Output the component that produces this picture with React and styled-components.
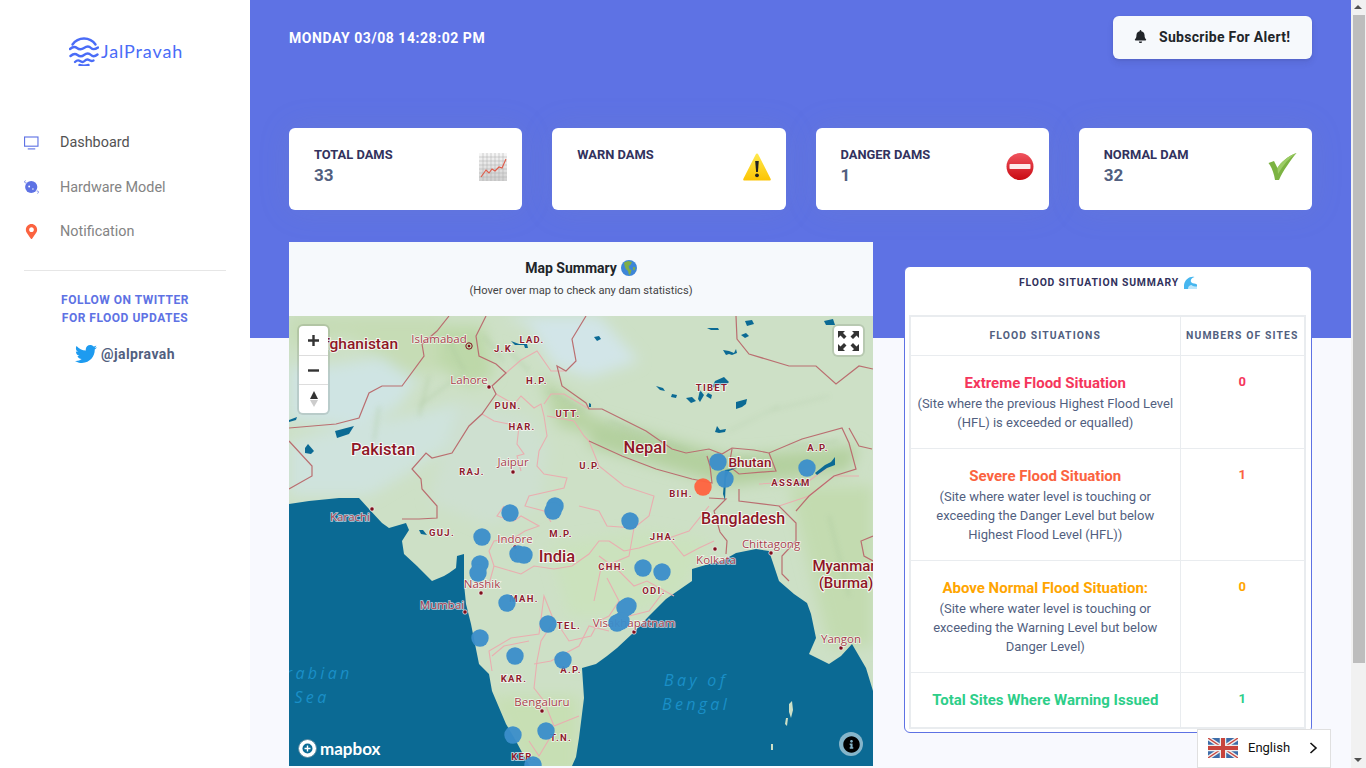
import styled, { createGlobalStyle } from 'styled-components';
import { FaBell, FaTwitter, FaMapMarkerAlt, FaInfoCircle } from 'react-icons/fa';

const GlobalStyle = createGlobalStyle`
  html, body {
    margin: 0;
    padding: 0;
    background: #f8f9fe;
    font-family: Roboto, "Open Sans", sans-serif;
    color: #525f7f;
  }
  * { box-sizing: border-box; }
`;

const MAP_W = 584;
const MAP_H = 450;

const markers = [
  [221, 197], [266, 190], [264, 195], [193, 221], [341, 205], [229, 238], [235, 239],
  [191, 248], [189, 257], [218, 287], [259, 308], [191, 322], [226, 340], [274, 344],
  [224, 419], [257, 415], [244, 449], [354, 252], [373, 256], [339, 290], [336, 292],
  [332, 305], [328, 307], [429, 146], [436, 163], [518, 152],
];

const countryLines = [
  '0,112 47,108 70,102 72,97 80,77 93,70 113,70 135,40 133,28 148,15 160,0',
  '197,0 187,20 190,40 207,48 217,57 203,70 207,78 193,98 180,110 163,137 143,142 137,137 123,153 132,163 133,173 148,190 148,202 130,203 113,203',
  '0,125 23,150 23,160 0,173',
  '297,0 283,23 287,45 277,55 268,50 273,70 297,87 300,93 313,93 333,103 357,115 383,133 397,137 420,133 433,138 443,132 465,134 480,137 513,123 553,112 560,127 567,153 545,160 520,180 507,195',
  '300,125 333,140 367,153 403,163 423,167 421,150 418,140',
  '443,133 440,150 450,158 487,155 480,137',
  '447,0 448,23 460,38 500,50 527,50 547,68 570,50 584,53',
  '560,112 570,130 583,133',
  '420,182 437,183 425,195 431,216 438,225 437,238',
  '450,173 450,185 490,190 507,207 507,225 493,240 493,258 500,265',
  '584,220 572,225 575,240 584,245',
];

const stateLines = [
  '217,57 232,44 248,35 262,55 277,55',
  '207,78 225,88 232,80 245,92 252,88 255,100 258,120 250,135 248,150 255,158 278,162 275,172 240,180 236,190 255,195 262,206',
  '193,98 205,105 230,110 228,128 235,138 228,140 232,155',
  '255,88 262,78 275,78 300,93',
  '258,100 285,105 295,120 300,125',
  '215,190 208,200 225,205 232,200 250,210 236,215 225,222 205,225 200,235 205,250 232,258 245,250 265,253 283,250 300,238 310,225 320,225',
  '300,125 310,150 335,170 365,180 360,200 345,212 318,210 310,195 290,190',
  '320,225 335,235 350,232 380,222 400,215 420,190',
  '380,222 395,240 410,232 425,225',
  '318,262 330,285 320,300 310,305 302,320 280,325 270,310',
  '345,212 340,240 312,252 305,285',
  '205,250 200,268 180,272',
  '203,355 200,335 222,322 250,318 255,280 265,305 252,325 248,345 245,372 255,385 265,410 290,400',
  '245,348 262,345 290,330 300,310 320,315',
  '203,340 215,330 240,325',
  '240,425 250,440 262,420',
  '310,240 330,255 345,270 358,265 385,280',
  '340,300 360,295 375,275',
  '490,190 520,180 545,160 570,160',
  '470,168 520,165 540,150',
];

const cityLabels = [
  ['Islamabad', 150, 27], ['Lahore', 180, 68], ['Jaipur', 224, 150], ['Karachi', 61, 205],
  ['Indore', 226, 227], ['Nashik', 193, 272], ['Mumbai', 153, 293], ['Kolkata', 427, 248],
  ['Chittagong', 482, 232], ['Visakhapatnam', 345, 311], ['Bengaluru', 253, 390], ['Yangon', 552, 327],
];

const stateLabels = [
  ['J.K.', 216, 36], ['LAD.', 243, 27], ['H.P.', 248, 68], ['PUN.', 219, 93], ['HAR.', 233, 114],
  ['UTT.', 279, 101], ['U.P.', 301, 153], ['RAJ.', 183, 159], ['GUJ.', 153, 220], ['M.P.', 272, 221],
  ['TIBET', 423, 75], ['BIH.', 392, 181], ['ASSAM', 502, 170], ['A.P.', 529, 135], ['JHA.', 374, 224],
  ['CHH.', 323, 254], ['ODI.', 365, 278], ['MAH.', 235, 286], ['TEL.', 280, 313], ['A.P.', 282, 357],
  ['KAR.', 225, 366], ['T.N.', 272, 425], ['KER.', 235, 444],
];

const countryLabels = [
  ['Afghanistan', 67, 33, 15.5], ['Pakistan', 94, 139, 16.5], ['Nepal', 356, 137, 16.5],
  ['Bhutan', 461, 151, 13.5], ['Bangladesh', 454, 208, 16], ['India', 268, 246, 16.5],
  ['Myanmar', 555, 255, 15], ['(Burma)', 557, 272, 15],
];

const cityDots = [
  [224, 156], [83, 193], [226, 231], [192, 277], [176, 296], [426, 233], [482, 237],
  [345, 316], [253, 395], [552, 332], [200, 71],
];

const lakes = [
  'M218,21 l4,4 l8,3 l8,0 l1,4 l-3,0 l-1,-3 l-9,0 z',
  'M305,21 l5,-1 l2,3 l-4,2 z',
  'M452,19 l5,-2 l3,3 l-4,2 z',
  'M456,5 l7,-1 l2,4 l-7,2 z',
  'M418,12 l11,0 l1,2 l-8,0 z',
  'M434,34 l6,1 l5,2 l2,-4 l1,4 l-5,2 l-3,-1 l-3,1 z',
  'M426,65 l9,-4 l5,5 l-4,4 l-6,-1 l-7,3 z',
  'M411,74 l4,5 l-4,7 l-2,-3 z',
  'M417,80 l2,-3 l4,2 l-1,4 z',
  'M397,82 l6,-1 l4,4 l-5,2 z',
  'M367,70 l7,2 l2,3 l-5,-1 z',
  'M383,78 l5,1 l-1,3 l-5,-1 z',
  'M447,86 l11,-3 l-1,5 l-4,3 l-6,2 z',
  'M428,110 l3,4 l6,-1 l-1,3 l-6,1 l-4,-1 z',
  'M535,5 l9,-2 l2,6 l-9,0 z',
  'M46,115 l19,-5 l-5,8 l-12,4 z',
  'M16,132 l3,-4 l6,7 l-3,3 l-6,-1 z',
  'M0,104 l8,-3 l-1,3 l-7,2 z',
  'M436,154 l12,-2 l-8,3 l-3,7 l-1,22 l-2,-6 z',
  'M509,167 l6,1 l-2,3 z',
  'M526,157 l10,-8 l6,-3 l4,-5 l0,8 l-8,3 l-10,7 z',
  'M300,87 l2,1 l0,3 l-2,0 z',
  'M130,214 l4,0 l4,5 l-6,-1 z',
];

const westSea = `M0,188 L20,185 L50,182 L70,182 L80,193 L93,207 L100,212 L117,207 L120,214 L113,225 L115,238 L128,250 L143,265 L155,260 L160,257 L167,252 L168,240 L175,238 L175,268 L177,288 L182,308 L190,348 L200,358 L203,375 L217,408 L227,425 L236,442 L241,${MAP_H} L0,${MAP_H}z`;
const eastSea = `M283,${MAP_H} L287,441 L290,422 L295,382 L293,352 L307,348 L318,340 L328,332 L343,318 L360,300 L377,283 L403,265 L403,253 L420,248 L433,245 L447,237 L467,233 L480,235 L485,250 L490,265 L505,278 L518,287 L522,298 L527,322 L520,338 L540,348 L552,340 L563,328 L577,352 L584,375 L584,${MAP_H}z`;

const Chart = () => (
  <svg width="28" height="28" viewBox="0 0 28 28">
    <defs>
      <linearGradient id="chartBg" x1="0" y1="0" x2="0" y2="1">
        <stop offset="0" stopColor="#f6f6f6" />
        <stop offset="1" stopColor="#d0d0d0" />
      </linearGradient>
    </defs>
    <rect width="28" height="28" fill="url(#chartBg)" />
    <path d="M4 0v28M8 0v28M12 0v28M16 0v28M20 0v28M24 0v28M0 4h28M0 8h28M0 12h28M0 16h28M0 20h28M0 24h28" stroke="#aaa" strokeWidth="0.5" fill="none" />
    <path d="M2 24l5-7 3 3 3-4 3 2 4-4 3 1 4-9" stroke="#e05a48" strokeWidth="1.100" fill="none" />
  </svg>
);

const Warning = () => (
  <svg width="28" height="28" viewBox="0 0 28 28">
    <defs>
      <linearGradient id="warnBg" x1="0" y1="0" x2="0" y2="1">
        <stop offset="0" stopColor="#ffe94d" />
        <stop offset="1" stopColor="#fcc403" />
      </linearGradient>
    </defs>
    <path d="M14 0.500c.6 0 1 .3 1.300 .9L27.600 25.700c.5 1 0 1.800-1 1.800H1.400c-1 0-1.500-.8-1-1.800L12.700 1.400c.3-.6 .7-.9 1.300-.9z" fill="url(#warnBg)" />
    <path d="M12.200 8h3.600l-.9 11h-1.800z" fill="#222" />
    <circle cx="14" cy="22.300" r="1.900" fill="#222" />
  </svg>
);

const NoEntry = () => (
  <svg width="28" height="28" viewBox="0 0 28 28">
    <defs>
      <linearGradient id="stopBg" x1="0" y1="0" x2="0" y2="1">
        <stop offset="0" stopColor="#f0545f" />
        <stop offset="1" stopColor="#c90a12" />
      </linearGradient>
    </defs>
    <circle cx="14" cy="13.500" r="13.500" fill="url(#stopBg)" />
    <rect x="3.500" y="11" width="21" height="5" rx="0.800" fill="#fdeaea" />
  </svg>
);

const Check = () => (
  <svg width="29" height="28" viewBox="0 0 29 28">
    <path d="M0.500 10L6 8l3.500 7C13 9 20 3 28.500 0 22 8 15 18 11 27H7C6 20 3.500 14 0.500 10z" fill="#7cb342" />
    <path d="M9.500 15C13 9 20 3 28.500 0 21 5 15 12 10 21z" fill="#9ccc65" />
  </svg>
);

const Globe = () => (
  <svg width="16" height="16" viewBox="0 0 16 16">
    <circle cx="8" cy="8" r="8" fill="#3d86d8" />
    <path d="M3 2.500l4-1.500 4 1-1.500 3-2 1 1 3 2 1-1 4-1.500 1-1-4-2.500-2.500-1-3z" fill="#7fae48" />
    <path d="M12 7l2.500 .5-1 3-1.500-1z" fill="#7fae48" />
  </svg>
);

const Wave = () => (
  <svg width="13" height="13" viewBox="0 0 13 13">
    <path d="M0 13V9C1 3 6 0 10.500 1 7 2 6 5 7.500 6.500 9 8 11 7 13 8.500V13z" fill="#46b6ef" />
    <path d="M4 13c0-3 2-4 3.500-4 1 1 3 1.500 5.500 1.500V13z" fill="#bde6fb" />
  </svg>
);

const LogoMark = () => (
  <svg width="30" height="30" viewBox="0 0 30 30" fill="none" stroke="#4a6cf7" strokeWidth="2.400" strokeLinecap="round">
    <path d="M3.500 8.500A14 14 0 0 1 26.500 8.500" />
    <path d="M1 13c3-2.500 5-2.500 7-1s4 2 7 0 5-2 7 0 4 1.500 7-.5" />
    <path d="M1.500 20c3-2.500 5-2.500 7-1s4 2 6.500 0 5-2 7 0 4 1.500 6.500-.5" />
    <path d="M6 26c2-2 3.500-2 5-1s3 1.500 4.500 0 3-2 4.500-1 2.500 1.500 4.500 .5" />
    <path d="M10.500 29c3 .8 6 .8 9 0" />
  </svg>
);

const TvIcon = () => (
  <svg width="16" height="14" viewBox="0 0 16 14" fill="none">
    <rect x="0.600" y="0.600" width="14.300" height="9.800" stroke="#5e72e4" strokeWidth="1.200" />
    <path d="M4 13.300h8" stroke="#5e72e4" strokeWidth="1.200" />
  </svg>
);

const PlanetIcon = () => (
  <svg width="16" height="16" viewBox="0 0 16 16">
    <circle cx="7.700" cy="8" r="6.500" fill="#5e72e4" />
    <circle cx="5.500" cy="7.500" r="1" fill="#fff" />
    <circle cx="9.500" cy="10" r="0.800" fill="#fff" />
    <path d="M1.500 1C0 2.500 .5 4 2.500 3.500M14.500 15c1.500-1.500 1-3-1-2.800" stroke="#5e72e4" strokeWidth="0.900" fill="none" />
  </svg>
);

const FlagUk = () => (
  <svg width="30" height="20" viewBox="0 0 30 20">
    <rect width="30" height="20" fill="#3d6ca8" />
    <path d="M0 0l30 20M30 0L0 20" stroke="#eee" strokeWidth="4" />
    <path d="M0 0l30 20M30 0L0 20" stroke="#c8443c" strokeWidth="1.300" />
    <path d="M15 0v20M0 10h30" stroke="#eee" strokeWidth="6.500" />
    <path d="M15 0v20M0 10h30" stroke="#c8443c" strokeWidth="4" />
  </svg>
);

const MapDrawing = () => (
  <MapSvg viewBox={`0 0 ${MAP_W} ${MAP_H}`} width={MAP_W} height={MAP_H}>
    <defs>
      <filter id="soft"><feGaussianBlur stdDeviation="7" /></filter>
      <filter id="softer"><feGaussianBlur stdDeviation="2.500" /></filter>
    </defs>
    <rect width={MAP_W} height={MAP_H} fill="#cde0c6" />

    <g filter="url(#soft)">
      <path d="M0,50 L40,50 L100,40 L130,60 L110,90 L70,110 L0,105z" fill="#cfe4e3" />
      <path d="M0,125 L60,110 L120,100 L175,85 L165,125 L130,150 L80,180 L0,180z" fill="#cfe3dd" />
      <path d="M215,0 L310,0 L350,45 L300,62 L265,50 L240,10z" fill="#d2e5e8" />
      <path d="M0,0 L150,0 L170,50 L120,60 L60,20 L0,30z" fill="#c6dcb5" />
      <path d="M150,10 L195,10 L205,60 L180,70 L150,50z" fill="#bdd8a9" />
      <path d="M170,85 L240,100 L260,130 L250,190 L200,210 L140,185z" fill="#cee0d0" />
      <path d="M300,100 L440,140 L570,130 L560,155 L440,170 L300,130z" fill="#b4d09f" />
      <path d="M250,60 L300,95 L310,120 L270,110z" fill="#b8d3a2" />
      <path d="M500,170 L584,170 L584,330 L540,330z" fill="#c3dbb0" />
      <path d="M200,380 L290,380 L290,460 L240,460z" fill="#c7dfb4" />
      <path d="M260,230 L360,215 L420,225 L390,280 L340,300 L280,300z" fill="#cbe2bd" />
    </g>
    <g filter="url(#softer)" stroke="#a6c49a" strokeWidth="1.500" fill="none" opacity="0.700">
      <path d="M160,25 L175,55 M140,60 L130,100 M90,90 L85,125 M195,20 L215,45 M215,30 L240,55 M260,75 L295,95 M320,105 L400,135 M410,138 L470,145 M500,130 L550,125 M540,200 L560,280 M130,90 L170,60" />
      <path d="M330,115 L355,125 M440,115 L490,90 M480,95 L540,80" opacity="0.500" />
    </g>

    <path fill="#0b6a94" d={westSea} />
    <path fill="#0b6a94" d={eastSea} />
    <path fill="#cde0c6" d="M500,388 l3,-3 l1,9 l-2,8 l-2,-6z M497,402 l2,0 l-1,8 l-2,-2z M482,428 l2,0 l0,6 l-2,0z" />

    <g fill="none" stroke="#e9aeb0" strokeWidth="1.100">
      {stateLines.map((pts, i) => <polyline key={i} points={pts} />)}
    </g>
    <g fill="none" stroke="#ba6e70" strokeWidth="1.200">
      {countryLines.map((pts, i) => <polyline key={i} points={pts} />)}
    </g>
    <g fill="#0b6a94">
      {lakes.map((d, i) => <path key={i} d={d} />)}
    </g>

    <g fill="#7e0f1c">
      {cityDots.map(([x, y], i) => <circle key={i} cx={x} cy={y} r="2.200" stroke="#fff" strokeWidth="0.700" />)}
      <circle cx="180" cy="30" r="3.200" fill="none" stroke="#7e0f1c" />
      <circle cx="180" cy="30" r="1.300" />
    </g>

    <g textAnchor="middle">
      {cityLabels.map(([t, x, y]) => <CityText key={t} x={x} y={y}>{t}</CityText>)}
      {stateLabels.map(([t, x, y]) => <StateText key={t + x} x={x} y={y}>{t}</StateText>)}
      {countryLabels.map(([t, x, y, s]) => <CountryText key={t} x={x} y={y} $size={s}>{t}</CountryText>)}
      <SeaText x="24" y="363">Arabian</SeaText>
      <SeaText x="23" y="387">Sea</SeaText>
      <SeaText x="407" y="370">Bay of</SeaText>
      <SeaText x="407" y="394">Bengal</SeaText>
    </g>

    <g opacity="0.950">
      {markers.map(([x, y], i) => <circle key={i} cx={x} cy={y} r="8.700" fill="#3b8ecb" />)}
      <circle cx="414" cy="171" r="8.700" fill="#ff633f" />
    </g>
  </MapSvg>
);

const stats = [
  { title: 'Total Dams', value: '33', icon: <Chart /> },
  { title: 'Warn Dams', value: '', icon: <Warning /> },
  { title: 'Danger Dams', value: '1', icon: <NoEntry /> },
  { title: 'Normal Dam', value: '32', icon: <Check /> },
];

const rows = [
  {
    color: '#f5365c', title: 'Extreme Flood Situation', count: 0,
    text: '(Site where the previous Highest Flood Level (HFL) is exceeded or equalled)',
  },
  {
    color: '#fb6340', title: 'Severe Flood Situation', count: 1,
    text: '(Site where water level is touching or exceeding the Danger Level but below Highest Flood Level (HFL))',
  },
  {
    color: '#ffa500', title: 'Above Normal Flood Situation:', count: 0,
    text: '(Site where water level is touching or exceeding the Warning Level but below Danger Level)',
  },
  { color: '#2dce89', title: 'Total Sites Where Warning Issued', count: 1 },
];

export default function App() {
  return (
    <Page>
      <GlobalStyle />
      <Sidebar>
        <Logo>
          <LogoMark />
          <LogoText>JalPravah</LogoText>
        </Logo>
        <Nav>
          <NavItem $active><NavIcon><TvIcon /></NavIcon>Dashboard</NavItem>
          <NavItem><NavIcon><PlanetIcon /></NavIcon>Hardware Model</NavItem>
          <NavItem><NavIcon><FaMapMarkerAlt size={15} color="#fb6340" /></NavIcon>Notification</NavItem>
        </Nav>
        <Divider />
        <Follow>Follow on Twitter<br />for flood updates</Follow>
        <Handle><FaTwitter size={22} color="#1d9bf0" />@jalpravah</Handle>
      </Sidebar>

      <Main>
        <TopBar>
          <Clock>MONDAY 03/08 14:28:02 PM</Clock>
          <SubscribeButton type="button"><FaBell size={13} />Subscribe For Alert!</SubscribeButton>
        </TopBar>

        <Stats>
          {stats.map((s) => (
            <StatCard key={s.title}>
              <div>
                <StatTitle>{s.title}</StatTitle>
                <StatValue>{s.value}</StatValue>
              </div>
              <StatIcon>{s.icon}</StatIcon>
            </StatCard>
          ))}
        </Stats>

        <Columns>
          <MapCard>
            <MapHeader>
              <MapTitle>Map Summary <Globe /></MapTitle>
              <MapHint>(Hover over map to check any dam statistics)</MapHint>
            </MapHeader>
            <MapFrame>
              <MapDrawing />
              <ZoomControls>
                <ControlButton>
                  <svg width="13" height="13" viewBox="0 0 13 13"><path d="M6.500 1v11M1 6.500h11" stroke="#333" strokeWidth="2.400" /></svg>
                </ControlButton>
                <ControlButton>
                  <svg width="13" height="13" viewBox="0 0 13 13"><path d="M1 6.500h11" stroke="#333" strokeWidth="2.400" /></svg>
                </ControlButton>
                <ControlButton>
                  <svg width="10" height="18" viewBox="0 0 10 18"><path d="M5 1l4 8H1z" fill="#333" /><path d="M5 17l4-7H1z" fill="#ccc" /></svg>
                </ControlButton>
              </ZoomControls>
              <FullscreenButton>
                <svg width="21" height="20" viewBox="0 0 21 20" fill="#333">
                  <path d="M0 0h7L5 2l3.500 3.500-2.500 2.500L2.500 4.500 0 7zM21 0h-7l2 2-3.500 3.500 2.500 2.500 3.500-3.500L21 7zM0 20h7l-2-2 3.500-3.500L6 12l-3.500 3.500L0 13zM21 20h-7l2-2-3.500-3.500 2.500-2.500 3.500 3.500L21 13z" />
                </svg>
              </FullscreenButton>
              <Attribution>
                <svg width="21" height="21" viewBox="0 0 21 21">
                  <circle cx="10.500" cy="10.500" r="9" fill="#fff" stroke="#5a8aa0" strokeWidth="1" />
                  <circle cx="10.500" cy="10.500" r="5" fill="#0b6a94" />
                  <path d="M10.500 7.500v6M7.500 10.500h6" stroke="#fff" strokeWidth="1.400" />
                </svg>
                mapbox
              </Attribution>
              <InfoButton><FaInfoCircle size={17} color="#000" /></InfoButton>
            </MapFrame>
          </MapCard>

          <FloodCard>
            <FloodTitle>Flood Situation Summary <Wave /></FloodTitle>
            <FloodTable>
              <thead>
                <tr>
                  <HeadCell $w={270}>Flood Situations</HeadCell>
                  <HeadCell>Numbers of Sites</HeadCell>
                </tr>
              </thead>
              <tbody>
                {rows.map((r) => (
                  <tr key={r.title}>
                    <BodyCell>
                      <RowTitle $color={r.color}>{r.title}</RowTitle>
                      {r.text && <RowText>{r.text}</RowText>}
                    </BodyCell>
                    <CountCell $color={r.color}>{r.count}</CountCell>
                  </tr>
                ))}
              </tbody>
            </FloodTable>
          </FloodCard>
        </Columns>
      </Main>

      <ScrollTrack>
        <ScrollArrow $up />
        <ScrollThumb />
        <ScrollArrow />
      </ScrollTrack>

      <Language>
        <FlagUk />
        <span>English</span>
        <svg width="9" height="12" viewBox="0 0 9 12" fill="none"><path d="M1.500 1l5.500 5-5.500 5" stroke="#111" strokeWidth="1.600" /></svg>
      </Language>
    </Page>
  );
}

const Page = styled.div`
  display: flex;
  min-height: 875px;
  padding-right: 15px;
`;

const Sidebar = styled.aside`
  flex: 0 0 250px;
  background: #fff;
  padding: 36px 24px 0;
  box-shadow: 0 0 2rem 0 rgba(136, 152, 170, 0.15);
`;

const Logo = styled.div`
  display: flex;
  align-items: center;
  gap: 2px;
  height: 30px;
  margin-left: 45px;
`;

const LogoText = styled.span`
  font-family: Lato, sans-serif;
  font-size: 18px;
  font-weight: 400;
  letter-spacing: 0.900px;
  color: #4a6cf7;
`;

const Nav = styled.nav`
  display: flex;
  flex-direction: column;
  gap: 22px;
  margin-top: 65.300px;
`;

const NavItem = styled.a`
  display: flex;
  align-items: center;
  height: 22.500px;
  font-size: 14.400px;
  color: ${(p) => (p.$active ? '#525252' : '#848484')};
`;

const NavIcon = styled.span`
  display: flex;
  justify-content: center;
  width: 15px;
  margin-right: 21px;
`;

const Divider = styled.hr`
  margin: 27px 0 0;
  border: 0;
  border-top: 1px solid #e6e6e6;
  width: 202px;
`;

const Follow = styled.div`
  margin-top: 20px;
  text-align: center;
  font-size: 12px;
  line-height: 18px;
  font-weight: 700;
  letter-spacing: 0.500px;
  text-transform: uppercase;
  color: #5e72e4;
`;

const Handle = styled.div`
  display: flex;
  align-items: center;
  justify-content: center;
  gap: 4px;
  margin-top: 16px;
  font-size: 14px;
  font-weight: 700;
  letter-spacing: 0.400px;
  color: #525f7f;
`;

const Main = styled.main`
  flex: 1;
  min-width: 0;
  padding: 16px 39px 0;
  background: linear-gradient(#5e72e4 338px, #f8f9fe 338px);
`;

const TopBar = styled.div`
  display: flex;
  align-items: center;
  justify-content: space-between;
  height: 43px;
`;

const Clock = styled.div`
  font-size: 14px;
  font-weight: 700;
  letter-spacing: 0.550px;
  color: #fff;
`;

const SubscribeButton = styled.button`
  display: flex;
  align-items: center;
  gap: 12px;
  width: 199px;
  height: 43px;
  padding: 0 21px 2px;
  border: 0;
  border-radius: 6px;
  background: #f6f9fc;
  box-shadow: 0 4px 6px rgba(50, 50, 93, 0.11), 0 1px 3px rgba(0, 0, 0, 0.08);
  font-family: inherit;
  font-size: 14px;
  font-weight: 700;
  letter-spacing: 0.300px;
  color: #212529;
`;

const Stats = styled.div`
  display: grid;
  grid-template-columns: repeat(4, 1fr);
  gap: 30px;
  margin-top: 69px;
`;

const StatCard = styled.div`
  display: flex;
  justify-content: space-between;
  height: 82px;
  padding: 19px 15px 0 25px;
  background: #fff;
  border-radius: 6px;
  box-shadow: 0 0 2rem 0 rgba(136, 152, 170, 0.15);
`;

const StatTitle = styled.h5`
  margin: 0;
  font-size: 12.900px;
  line-height: 15px;
  font-weight: 700;
  text-transform: uppercase;
  color: #32325d;
`;

const StatValue = styled.div`
  margin-top: 3px;
  font-size: 17px;
  line-height: 20px;
  font-weight: 700;
  color: #525f7f;
`;

const StatIcon = styled.div`
  padding-top: 6px;
`;

const Columns = styled.div`
  display: grid;
  grid-template-columns: 584px 408px;
  justify-content: space-between;
  align-items: start;
  margin-top: 32px;
`;

const MapCard = styled.section`
  width: 584px;
`;

const MapHeader = styled.header`
  height: 74px;
  padding-top: 17px;
  background: #f6f9fc;
  text-align: center;
`;

const MapTitle = styled.h3`
  display: flex;
  align-items: center;
  justify-content: center;
  gap: 4px;
  height: 18px;
  margin: 0;
  font-size: 14px;
  font-weight: 700;
  color: #212529;
`;

const MapHint = styled.div`
  margin-top: 6px;
  font-size: 11.100px;
  line-height: 16px;
  color: #444;
`;

const MapFrame = styled.div`
  position: relative;
  height: 450px;
  overflow: hidden;
`;

const MapSvg = styled.svg`
  display: block;
`;

const CityText = styled.text`
  font-family: "Open Sans", sans-serif;
  font-size: 11.500px;
  fill: #a8414d;
  stroke: #fff;
  stroke-width: 1.500px;
  stroke-opacity: 0.700;
  paint-order: stroke;
`;

const StateText = styled.text`
  font-family: Roboto, sans-serif;
  font-size: 9.500px;
  font-weight: 700;
  letter-spacing: 1.300px;
  fill: #8f1c2e;
  stroke: #fff;
  stroke-width: 1.500px;
  stroke-opacity: 0.800;
  paint-order: stroke;
`;

const CountryText = styled.text`
  font-family: Roboto, sans-serif;
  font-size: ${(p) => p.$size}px;
  font-weight: 500;
  fill: #8f1626;
  stroke: #fff;
  stroke-width: 2px;
  stroke-opacity: 0.800;
  paint-order: stroke;
`;

const SeaText = styled.text`
  font-family: "Open Sans", sans-serif;
  font-size: 16px;
  font-style: italic;
  letter-spacing: 3.300px;
  fill: #1a8fc7;
`;

const ZoomControls = styled.div`
  position: absolute;
  top: 10px;
  left: 10px;
  width: 29px;
  background: #fff;
  border-radius: 4px;
  box-shadow: 0 0 0 2px rgba(0, 0, 0, 0.1);
`;

const ControlButton = styled.div`
  display: flex;
  align-items: center;
  justify-content: center;
  height: 29px;
  & + & {
    border-top: 1px solid #ddd;
  }
`;

const FullscreenButton = styled.div`
  position: absolute;
  top: 10px;
  right: 10px;
  display: flex;
  align-items: center;
  justify-content: center;
  width: 29px;
  height: 29px;
  background: #fff;
  border-radius: 4px;
  box-shadow: 0 0 0 2px rgba(0, 0, 0, 0.1);
`;

const Attribution = styled.div`
  position: absolute;
  left: 8px;
  bottom: 7px;
  display: flex;
  align-items: center;
  gap: 2px;
  font-family: Lato, sans-serif;
  font-size: 17px;
  font-weight: 700;
  color: #fff;
`;

const InfoButton = styled.div`
  position: absolute;
  right: 10px;
  bottom: 10px;
  display: flex;
  align-items: center;
  justify-content: center;
  width: 24px;
  height: 24px;
  border-radius: 50%;
  background: rgba(255, 255, 255, 0.5);
`;

const FloodCard = styled.section`
  margin: 24px 0 0;
  width: 408px;
  height: 467px;
  padding: 0 4px;
  background: #fff;
  border: 1px solid #5e72e4;
  border-radius: 6px;
`;

const FloodTitle = styled.h6`
  display: flex;
  align-items: center;
  justify-content: center;
  gap: 5px;
  height: 48px;
  margin: 0;
  padding-bottom: 18px;
  font-size: 10.400px;
  font-weight: 700;
  letter-spacing: 0.800px;
  text-transform: uppercase;
  color: #32325d;
`;

const FloodTable = styled.table`
  width: 397px;
  border-collapse: collapse;
  border: 2px solid #e9ecef;
`;

const HeadCell = styled.th`
  width: ${(p) => (p.$w ? `${p.$w}px` : 'auto')};
  height: 39px;
  padding: 0;
  border: 1px solid #e9ecef;
  font-size: 10.400px;
  font-weight: 700;
  letter-spacing: 1.100px;
  text-transform: uppercase;
  color: #525f7f;
`;

const BodyCell = styled.td`
  padding: 16px 6px;
  border: 1px solid #e9ecef;
  text-align: center;
`;

const CountCell = styled.td`
  padding: 16px 6px;
  border: 1px solid #e9ecef;
  text-align: center;
  vertical-align: top;
  font-size: 13px;
  line-height: 20px;
  font-weight: 700;
  color: ${(p) => p.$color};
`;

const RowTitle = styled.div`
  font-size: 15px;
  line-height: 22px;
  font-weight: 700;
  color: ${(p) => p.$color};
`;

const RowText = styled.div`
  font-size: 13px;
  line-height: 19px;
  color: #525f7f;
`;

const ScrollTrack = styled.div`
  position: fixed;
  top: 0;
  right: 0;
  bottom: 0;
  display: flex;
  flex-direction: column;
  width: 15px;
  background: #f1f1f1;
`;

const ScrollThumb = styled.div`
  flex: 0 0 648px;
  margin: 0 1px 0 2px;
  background: #bdbdbd;
`;

const ScrollArrow = styled.div`
  flex: 0 0 15px;
  position: relative;
  margin-top: ${(p) => (p.$up ? '0' : 'auto')};
  &::after {
    content: '';
    position: absolute;
    left: 3px;
    top: 5px;
    border-left: 4px solid transparent;
    border-right: 4px solid transparent;
    ${(p) => (p.$up ? 'border-bottom: 4px solid #505050;' : 'border-top: 4px solid #505050;')}
  }
`;

const Language = styled.div`
  position: fixed;
  right: 35px;
  bottom: 0;
  display: flex;
  align-items: center;
  width: 134px;
  height: 39px;
  padding: 0 12px 2px 10px;
  background: #fff;
  border: 1px solid #e0e0e0;
  font-size: 13px;
  color: #111;
  span {
    margin: 0 auto 0 10px;
  }
`;
